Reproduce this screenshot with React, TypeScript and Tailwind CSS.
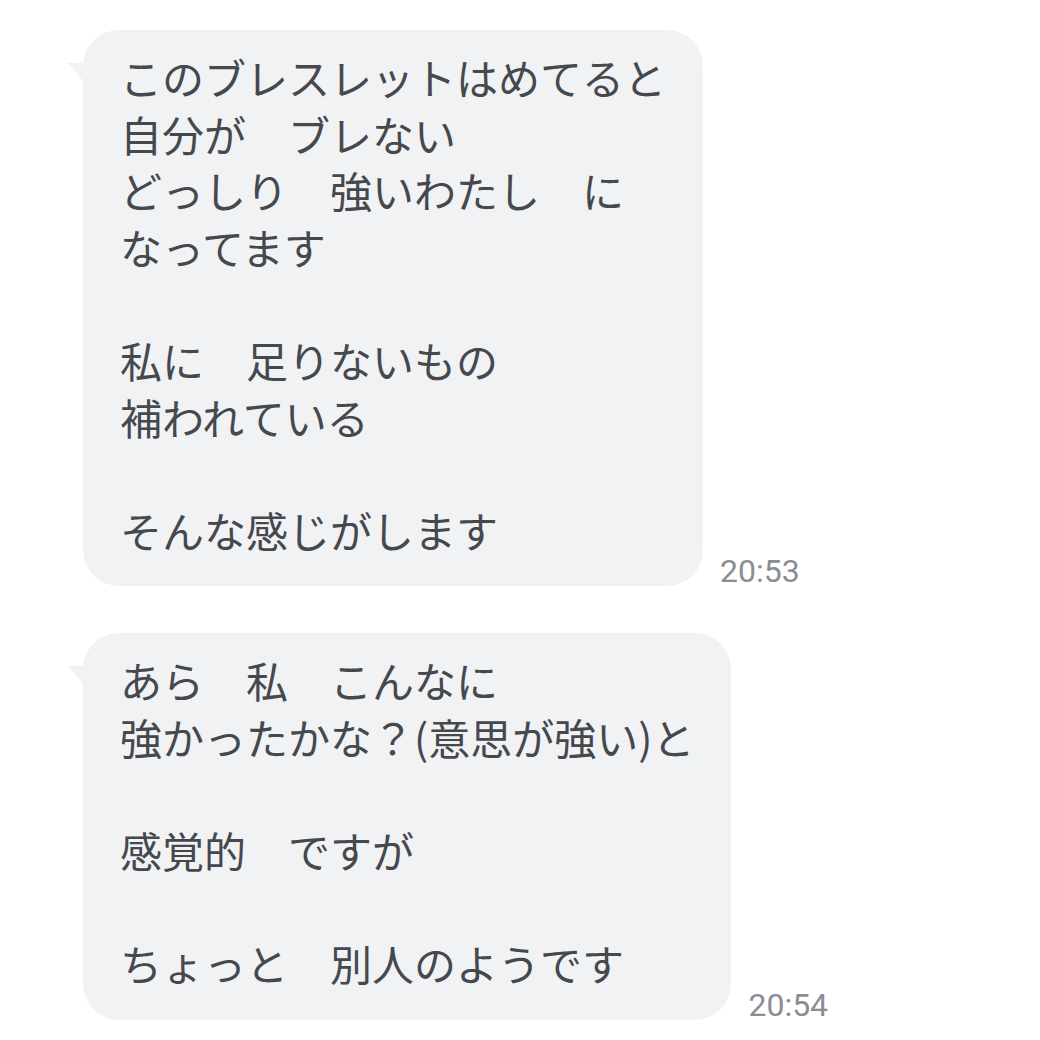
import React from 'react';

type Message = {
    lines: string[];
    time: string;
};

const messages: Message[] = [
    {
        lines: [
            'このブレスレットはめてると',
            '自分が　ブレない',
            'どっしり　強いわたし　に',
            'なってます',
            '',
            '私に　足りないもの',
            '補われている',
            '',
            'そんな感じがします',
        ],
        time: '20:53',
    },
    {
        lines: [
            'あら　私　こんなに',
            '強かったかな？(意思が強い)と',
            '',
            '感覚的　ですが',
            '',
            'ちょっと　別人のようです',
        ],
        time: '20:54',
    },
];

const Bubble = ({ message }: { message: Message }) => {
    return (
        <div className="flex items-end gap-[17px]">
            <div className="relative rounded-[36px] bg-[#f1f2f4] pl-[37px] pr-[37px] pt-[19px] pb-[28px]">
                {/* tail on the upper left */}
                <svg className="absolute left-[-16px] top-[33px]" width="18" height="22" viewBox="0 0 18 22">
                    <path d="M0 0 H18 V22 Q10 8 0 0 Z" fill="#f1f2f4" />
                </svg>
                <div className="text-[42px] leading-[56.6px] text-[#45484d]">
                    {message.lines.map((line, i) => (
                        <div key={i} className="whitespace-pre">{line === '' ? '\u00a0' : line}</div>
                    ))}
                </div>
            </div>
            <span
                className="text-[32px] leading-none text-[#8a8e94] mb-[-1px]"
                style={{ fontFamily: 'Roboto, "Noto Sans CJK JP", sans-serif' }}
            >
                {message.time}
            </span>
        </div>
    );
};

const App = () => {
    return (
        <div
            className="w-[1040px] h-[1040px] bg-white pl-[83px] pt-[30px] flex flex-col gap-[47px]"
            style={{ fontFamily: '"Noto Sans CJK JP", "Noto Sans", sans-serif' }}
        >
            {messages.map((m) => (
                <Bubble key={m.time} message={m} />
            ))}
        </div>
    );
};

export default App;
